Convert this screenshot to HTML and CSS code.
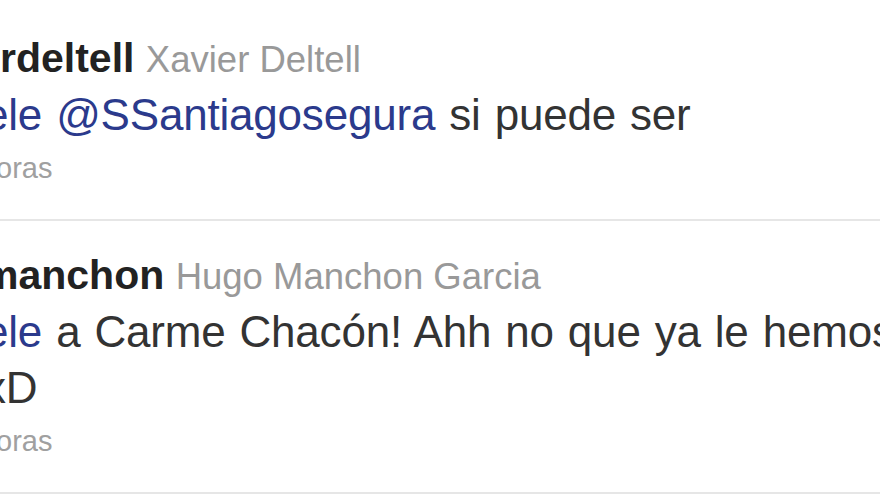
FILE: index.html
```html
<!DOCTYPE html>
<html lang="es">
<head>
    <meta charset="UTF-8">
    <meta name="viewport" content="width=device-width, initial-scale=1.0">
    <title>Tweets</title>
    <link rel="stylesheet" href="styles.css">
</head>
<body>
    <div class="timeline">
        <div class="tweet">
            <div class="tweet-header">
                <span class="screen-name">rdeltell</span>
                <span class="full-name">Xavier Deltell</span>
            </div>
            <div class="tweet-text">
                <a class="mention" href="#">ele</a> <a class="mention" href="#">@SSantiagosegura</a> si puede ser
            </div>
            <div class="tweet-time">oras</div>
        </div>

        <div class="tweet">
            <div class="tweet-header tweet-header-cut">
                <span class="screen-name">manchon</span>
                <span class="full-name">Hugo Manchon Garcia</span>
            </div>
            <div class="tweet-text">
                <a class="mention" href="#">ele</a> a Carme Chacón! Ahh no que ya le hemos<br>xD
            </div>
            <div class="tweet-time">oras</div>
        </div>
    </div>
</body>
</html>
```

FILE: styles.css
```css
body {
    margin: 0;
    background-color: white;
    font-family: "Liberation Sans", Arial, sans-serif;
    overflow: hidden;
}

.timeline {
    padding-top: 4px;
}

.tweet {
    padding: 26px 0 26px 0;
    border-bottom: 2px solid #e6e6e6;
    white-space: nowrap;
}

.tweet-header {
    font-size: 41px;
    line-height: 57px;
}

/* crop of the screenshot cuts the long handle */
.tweet-header-cut {
    margin-left: -18px;
}

.screen-name {
    font-weight: bold;
    color: #222;
}

.full-name {
    font-size: 36.5px;
    line-height: 1;
    color: #999;
}

.tweet-text {
    margin-left: -16px;
    font-size: 44px;
    line-height: 56px;
    word-spacing: 2px;
    letter-spacing: -0.2px;
    color: #333;
}

.mention {
    color: #2b3a8c;
    text-decoration: none;
}

.tweet-time {
    margin-left: -4px;
    font-size: 29px;
    line-height: 50px;
    color: #a0a0a0;
}
```
